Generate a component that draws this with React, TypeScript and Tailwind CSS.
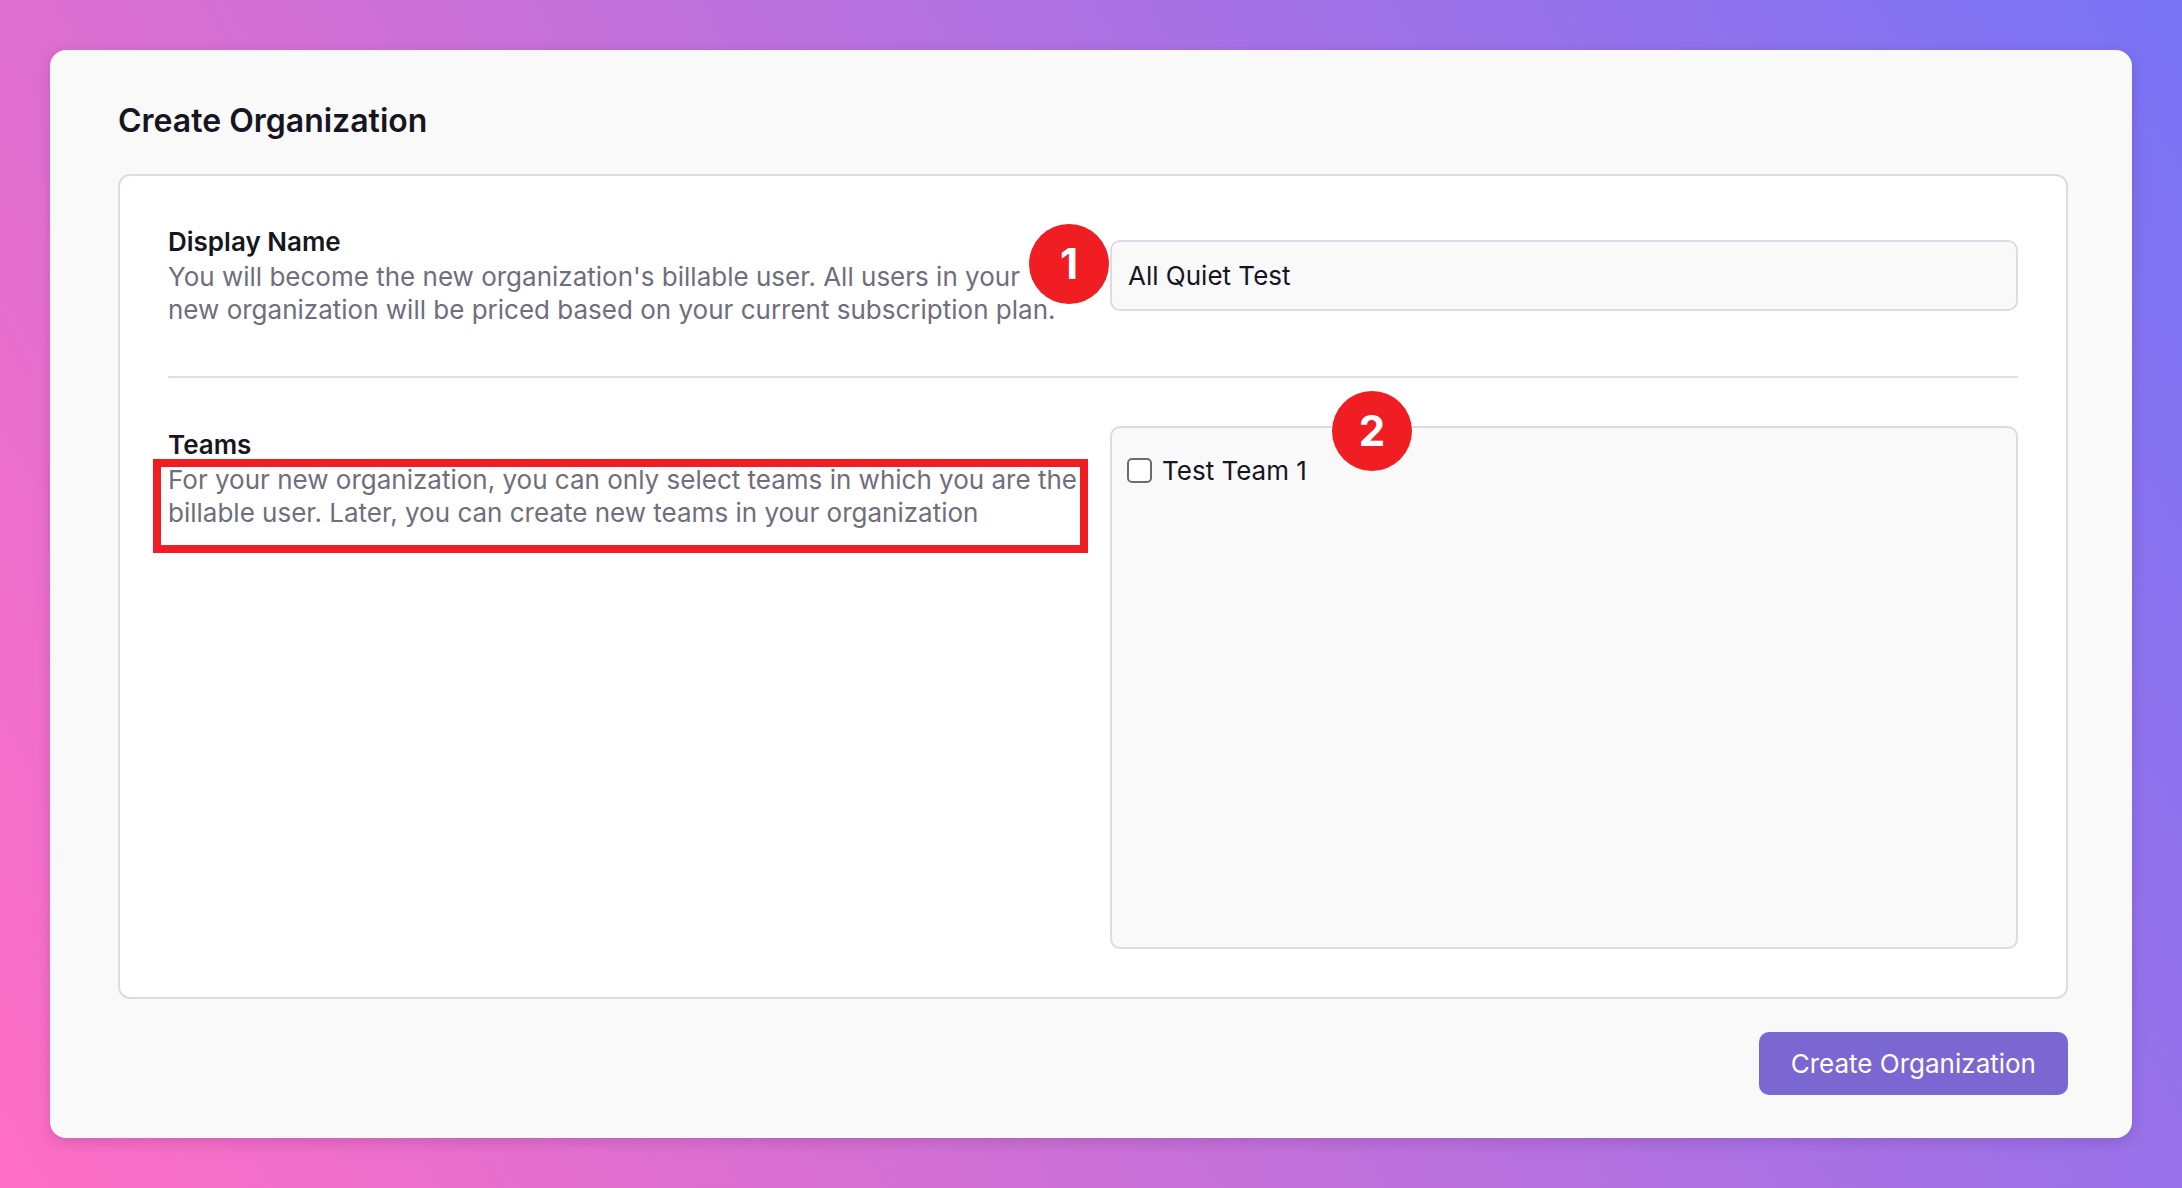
import React from "react";

function Badge({ n, className }: { n: string; className: string }) {
  return (
    <div
      className={
        "absolute flex h-[80px] w-[80px] items-center justify-center rounded-full bg-[#f01e22] text-[42px] font-bold leading-none text-white " +
        className
      }
    >
      {n}
    </div>
  );
}

export default function App() {
  return (
    <div
      className="flex h-[1188px] w-[2182px] p-[50px] bg-[linear-gradient(60deg,#ff6ec4,#7873f5)]"
      style={{ fontFamily: "Inter, 'Noto Sans', sans-serif" }}
    >
      <div className="flex flex-1 flex-col rounded-[16px] bg-[#f9f9f9] pl-[68px] pr-[64px] pt-[50px] shadow-[0_4px_14px_rgba(60,20,80,0.18)]">
        <h1 className="text-[32px] font-semibold leading-[42px] text-[#17161f]">Create Organization</h1>

        <div className="mt-[32px] rounded-[12px] border-2 border-[#dcdbe6] bg-white px-[48px] pt-[48px] pb-[48px]">
          {/* Row 1 */}
          <div className="flex items-center gap-[24px] pb-[50px]">
            <div className="w-[918px] shrink-0 text-[26px]">
              <div className="font-semibold leading-[36px] text-[#17161f]">Display Name</div>
              <p className="leading-[33px] text-[#6f6e7c]">
                You will become the new organization's billable user. All users in your
                <br />
                new organization will be priced based on your current subscription plan.
              </p>
            </div>
            <div className="relative flex-1">
              <Badge n="1" className="left-[-81px] top-[-16px]" />
              <div className="flex h-[71px] items-center rounded-[10px] border-2 border-[#dcdbe6] bg-[#f9f9fa] pl-[16px] text-[26px] text-[#17161f]">
                All Quiet Test
              </div>
            </div>
          </div>

          <div className="h-[2px] bg-[#dedde8]" />

          {/* Row 2 */}
          <div className="flex items-start gap-[24px] pt-[48px]">
            <div className="w-[918px] shrink-0 text-[26px]">
              <div className="font-semibold leading-[37px] text-[#17161f]">Teams</div>
              <div className="relative">
                <p className="leading-[33px] text-[#6f6e7c]">
                  For your new organization, you can only select teams in which you are the
                  <br />
                  billable user. Later, you can create new teams in your organization
                </p>
                <div className="absolute left-[-15px] right-[-2px] top-[-4px] bottom-[-24px] border-[8px] border-[#f01e22]" />
              </div>
            </div>
            <div className="relative flex-1">
              <Badge n="2" className="left-[222px] top-[-35px]" />
              <div className="h-[523px] rounded-[10px] border-2 border-[#dcdbe6] bg-[#f9f9fa] px-[15px] pt-[26px]">
                <label className="flex items-center gap-[10px] text-[26px] leading-[33px] text-[#17161f]">
                  <span className="h-[25px] w-[25px] rounded-[5px] border-2 border-[#6b6b73] bg-white" />
                  Test Team 1
                </label>
              </div>
            </div>
          </div>
        </div>

        <div className="mt-[33px] flex justify-end">
          <button className="h-[63px] rounded-[10px] bg-[#7b67d1] px-[32px] text-[26px] text-white">
            Create Organization
          </button>
        </div>
      </div>
    </div>
  );
}
